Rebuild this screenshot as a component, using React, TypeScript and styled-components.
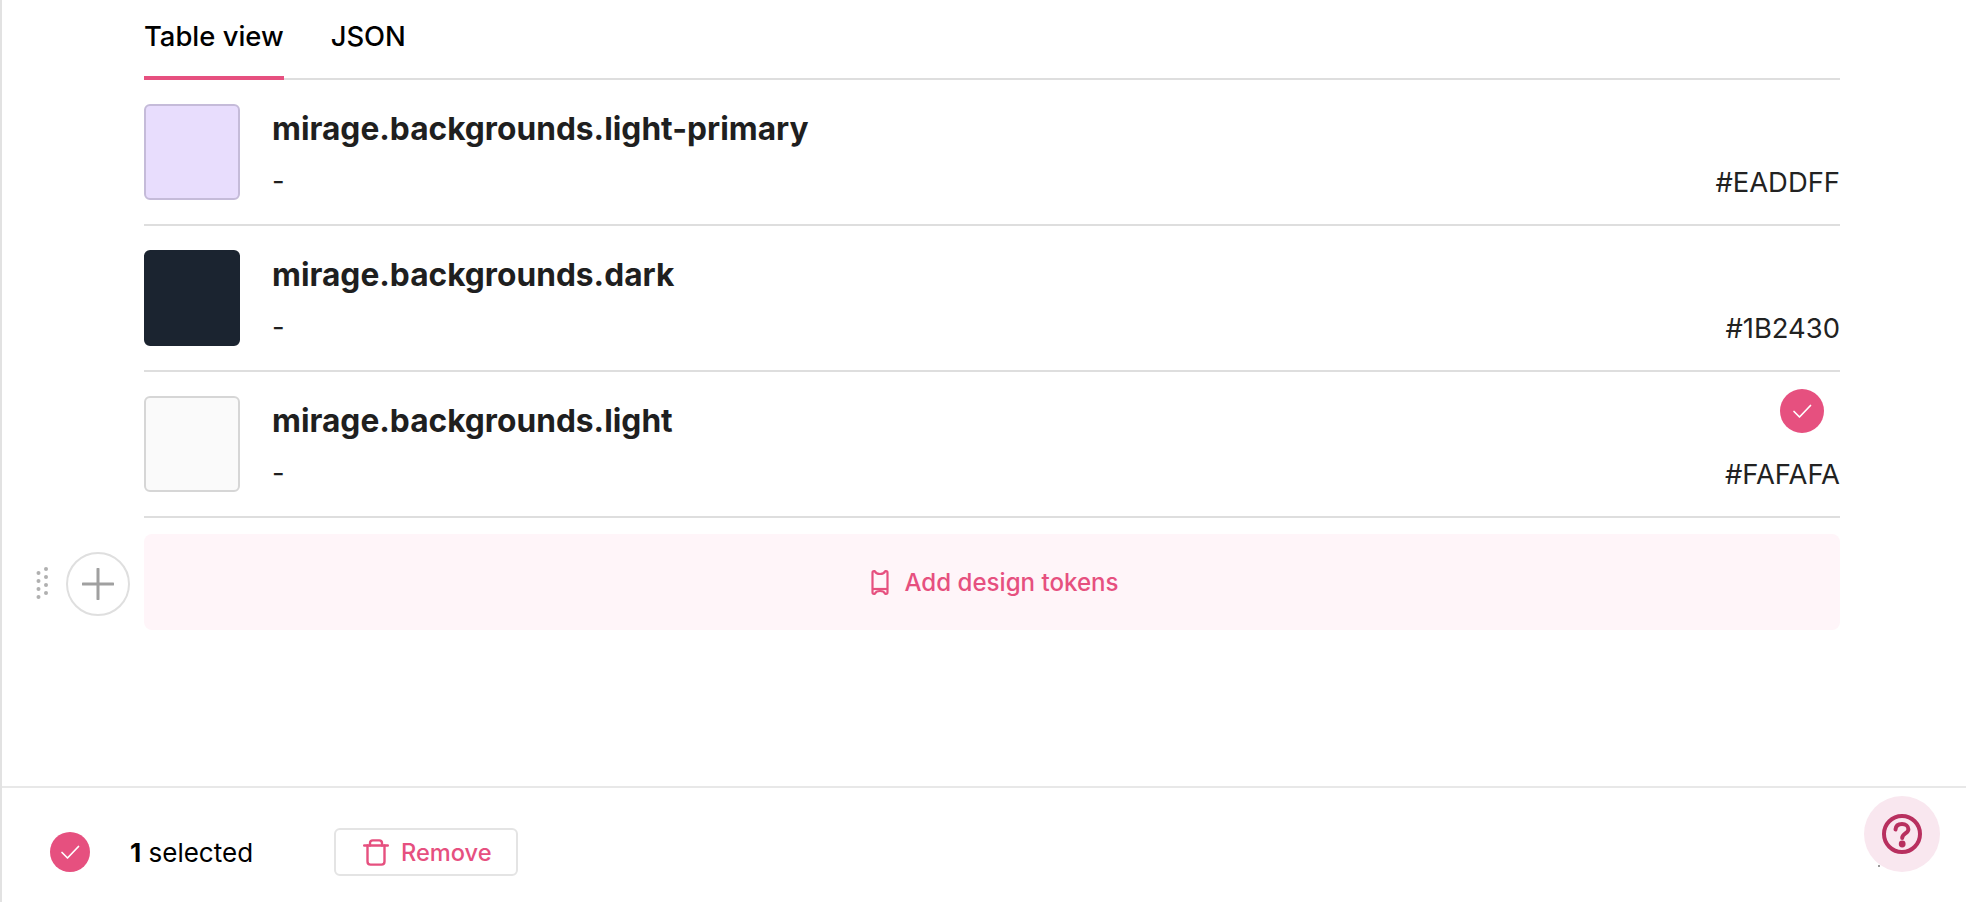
import React from 'react';
import styled, { createGlobalStyle } from 'styled-components';

const GlobalStyle = createGlobalStyle`
  html, body {
    margin: 0;
    padding: 0;
    background: #fff;
  }
  * {
    box-sizing: border-box;
  }
`;

const pink = '#e6507f';

const Page = styled.div`
  position: relative;
  display: flex;
  flex-direction: column;
  width: 1966px;
  height: 902px;
  overflow: hidden;
  border-left: 2px solid #e2e2e2;
  font-family: Inter, 'Liberation Sans', sans-serif;
  color: #1f1f1f;
`;

const Content = styled.div`
  flex: 1;
  padding: 0 126px 0 142px;
`;

const Tabs = styled.div`
  display: flex;
  gap: 47px;
  height: 80px;
  border-bottom: 2px solid #dedede;
`;

const Tab = styled.div<{ $active?: boolean }>`
  position: relative;
  padding-top: 20px;
  font-size: 27.4px;
  line-height: 32px;
  font-weight: 500;
  color: #000;

  ${(p) => p.$active && `
    &::after {
      content: '';
      position: absolute;
      left: 0;
      right: 0;
      bottom: -2px;
      height: 4px;
      background: ${pink};
    }
  `}
`;

const Row = styled.div`
  position: relative;
  display: flex;
  gap: 32px;
  height: 146px;
  padding: 24px 0;
  border-bottom: 2px solid #dedede;
`;

const Swatch = styled.div<{ $fill: string; $edge: string }>`
  width: 96px;
  height: 96px;
  flex: none;
  border-radius: 6px;
  background: ${(p) => p.$fill};
  border: 2px solid ${(p) => p.$edge};
`;

const Info = styled.div`
  flex: 1;
  padding-top: 7px;
`;

const Title = styled.div`
  font-size: 31.7px;
  line-height: 36px;
  font-weight: 700;
  color: #1f1f1f;
`;

const Description = styled.div`
  margin-top: 18px;
  font-size: 27.4px;
  line-height: 32px;
`;

const Hex = styled.div`
  align-self: flex-end;
  margin-bottom: 2px;
  font-size: 27.4px;
  line-height: 32px;
  color: #222;
`;

const RowBadge = styled.div`
  position: absolute;
  top: 17px;
  right: 16px;
`;

const CheckCircle = styled.div<{ $size: number }>`
  display: flex;
  align-items: center;
  justify-content: center;
  width: ${(p) => p.$size}px;
  height: ${(p) => p.$size}px;
  border-radius: 50%;
  background: ${pink};
`;

const AddRow = styled.div`
  position: relative;
  margin-top: 16px;
`;

const AddBar = styled.div`
  display: flex;
  align-items: center;
  justify-content: center;
  gap: 15px;
  height: 96px;
  padding-left: 6px;
  border-radius: 8px;
  background: #fff5f9;
  font-size: 24.1px;
  font-weight: 500;
  color: ${pink};
`;

const Gutter = styled.div`
  position: absolute;
  top: 18px;
  left: -108px;
  display: flex;
  align-items: center;
  gap: 18px;
`;

const AddCircle = styled.div`
  display: flex;
  align-items: center;
  justify-content: center;
  width: 64px;
  height: 64px;
  border-radius: 50%;
  border: 2px solid #dfdfdf;
`;

const Footer = styled.div`
  display: flex;
  align-items: center;
  height: 116px;
  padding: 14px 0 0 48px;
  border-top: 2px solid #e8e8e8;
`;

const Selected = styled.div`
  margin-left: 40px;
  width: 204px;
  font-size: 26px;
  color: #000;

  b {
    font-weight: 700;
  }
`;

const RemoveButton = styled.div`
  display: flex;
  align-items: center;
  gap: 12px;
  width: 184px;
  height: 48px;
  padding-left: 27px;
  border: 2px solid #e4e4e4;
  border-radius: 6px;
  font-size: 23.6px;
  font-weight: 500;
  color: ${pink};
`;

const HelpButton = styled.div`
  position: absolute;
  top: 796px;
  left: 1862px;
  display: flex;
  align-items: center;
  justify-content: center;
  width: 76px;
  height: 76px;
  border-radius: 50%;
  background: #f9e7ef;

  &::after {
    content: '';
    position: absolute;
    left: 14px;
    bottom: 5px;
    width: 2px;
    height: 2px;
    background: #9a9a9a;
  }
`;

const Check = () => (
  <svg width="20" height="16" viewBox="0 0 20 16" fill="none">
    <path d="M2 8.5L7.5 14L18.5 2.5" stroke="#fff" strokeWidth="1.7" strokeLinecap="round" strokeLinejoin="round" />
  </svg>
);

const DragDots = () => (
  <svg width="12" height="34" viewBox="0 0 12 34" fill="#b0b0b0">
    {[6, 14, 22, 30].map((y) => <circle key={`l${y}`} cx="2.5" cy={y} r="2" />)}
    {[2, 10, 18, 26].map((y) => <circle key={`r${y}`} cx="10" cy={y} r="2" />)}
  </svg>
);

const Plus = () => (
  <svg width="32" height="32" viewBox="0 0 32 32" fill="none">
    <path d="M16 1V31M1 16H31" stroke="#a0a0a0" strokeWidth="3" strokeLinecap="round" />
  </svg>
);

const Ticket = () => (
  <svg width="18" height="25" viewBox="0 0 18 25" fill="none" stroke={pink} strokeWidth="2.2" strokeLinejoin="round">
    <path d="M1.5 2.8Q1.5 1.2 3 1.2H3.8Q5 4 9 4Q13 4 14.2 1.2H15Q16.5 1.2 16.5 2.8V22.2Q16.5 23.8 15 23.8H14.2Q13 21 9 21Q5 21 3.8 23.8H3Q1.5 23.8 1.5 22.2Z" />
    <path d="M1.5 19H16.5" />
  </svg>
);

const Trash = () => (
  <svg width="26" height="27" viewBox="0 0 26 27" fill="none" stroke={pink} strokeWidth="2.4" strokeLinecap="round" strokeLinejoin="round">
    <path d="M1.2 6.5H24.8" />
    <path d="M7 6.5V4.2Q7 1.4 9.8 1.4H16.2Q19 1.4 19 4.2V6.5" />
    <path d="M4.5 6.5V22.5Q4.5 25.6 7.6 25.6H18.4Q21.5 25.6 21.5 22.5V6.5" />
  </svg>
);

const Help = () => (
  <svg width="40" height="40" viewBox="0 0 40 40" fill="none" stroke="#b8305f" strokeWidth="4" strokeLinecap="round">
    <circle cx="20" cy="20" r="18" />
    <path d="M13.5 15.5C13.8 11.8 16.6 10 20 10C23.6 10 26.4 12.2 26.4 15.3C26.4 19.4 20.2 19.6 20.2 24" />
    <circle cx="20.2" cy="30" r="1.4" fill="#b8305f" />
  </svg>
);

const tokens = [
  { name: 'mirage.backgrounds.light-primary', hex: '#EADDFF', fill: '#e8ddfd', edge: '#c5bbd9' },
  { name: 'mirage.backgrounds.dark', hex: '#1B2430', fill: '#1b2430', edge: '#1b2430' },
  { name: 'mirage.backgrounds.light', hex: '#FAFAFA', fill: '#fafafa', edge: '#d6d6d6', selected: true },
];

export default function App() {
  return (
    <Page>
      <GlobalStyle />
      <Content>
        <Tabs>
          <Tab $active>Table view</Tab>
          <Tab>JSON</Tab>
        </Tabs>
        {tokens.map((token) => (
          <Row key={token.name}>
            <Swatch $fill={token.fill} $edge={token.edge} />
            <Info>
              <Title>{token.name}</Title>
              <Description>-</Description>
            </Info>
            <Hex>{token.hex}</Hex>
            {token.selected && (
              <RowBadge>
                <CheckCircle $size={44}><Check /></CheckCircle>
              </RowBadge>
            )}
          </Row>
        ))}
        <AddRow>
          <Gutter>
            <DragDots />
            <AddCircle><Plus /></AddCircle>
          </Gutter>
          <AddBar>
            <Ticket />
            Add design tokens
          </AddBar>
        </AddRow>
      </Content>
      <Footer>
        <CheckCircle $size={40}><Check /></CheckCircle>
        <Selected><b>1</b> selected</Selected>
        <RemoveButton>
          <Trash />
          Remove
        </RemoveButton>
      </Footer>
      <HelpButton><Help /></HelpButton>
    </Page>
  );
}
